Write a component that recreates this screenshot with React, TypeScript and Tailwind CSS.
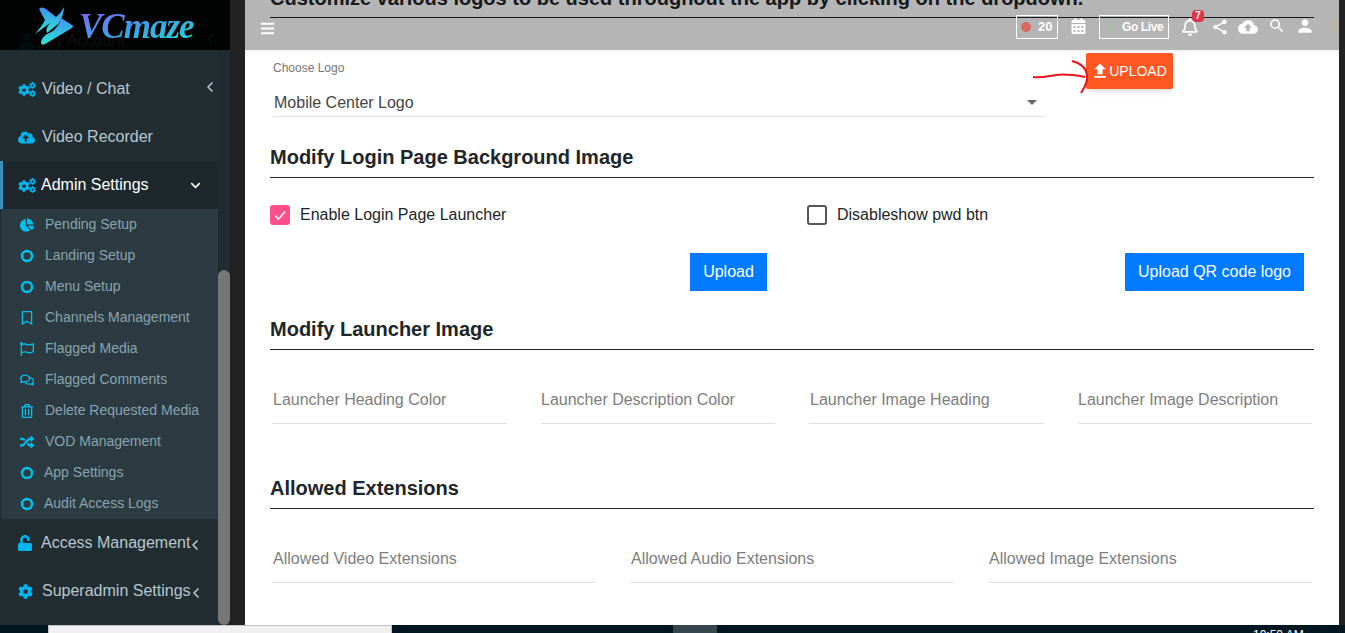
import React from "react";
import {
  FaCloudUploadAlt, FaChartPie, FaRegBookmark, FaRegFlag, FaRegComments,
  FaRegTrashAlt, FaRandom, FaUnlock, FaCog, FaBars, FaCalendarAlt, FaRegBell, FaUser,
} from "react-icons/fa";
import { MdShare, MdCloudUpload, MdSearch, MdPerson, MdFileUpload } from "react-icons/md";
import { ChevronLeft, ChevronDown } from "lucide-react";

type IconT = React.ComponentType<{ className?: string }>;

function Ring({ className }: { className?: string }) {
  return (
    <svg viewBox="0 0 14 14" className={className}>
      <circle cx="7" cy="7" r="5" fill="none" stroke="currentColor" strokeWidth="2.5" />
    </svg>
  );
}

function Cogs({ className }: { className?: string }) {
  return (
    <span className={`flex items-center ${className ?? ""}`}>
      <FaCog className="w-[12px] h-[12px] shrink-0 mt-[1px]" />
      <span className="flex flex-col gap-[1px] -ml-[1px]">
        <FaCog className="w-[7px] h-[7px]" />
        <FaCog className="w-[7px] h-[7px]" />
      </span>
    </span>
  );
}

const subItems: [IconT, string, string][] = [
  [FaChartPie, "Pending Setup", "ml-[7px]"],
  [Ring, "Landing Setup", "ml-[7px]"],
  [Ring, "Menu Setup", "ml-[7px]"],
  [FaRegBookmark, "Channels Management", "ml-[7px]"],
  [FaRegFlag, "Flagged Media", "ml-[7px]"],
  [FaRegComments, "Flagged Comments", "ml-[7px]"],
  [FaRegTrashAlt, "Delete Requested Media", "ml-[7px]"],
  [FaRandom, "VOD Management", "ml-[7px]"],
  [Ring, "App Settings", "ml-[6px]"],
  [Ring, "Audit Access Logs", "ml-[6px]"],
];

function NavRow({ icon: Icon, label, chevron, active, gap, iconClass }: { icon: IconT; label: string; chevron?: "left" | "down" | "tight"; active?: boolean; gap?: string; iconClass?: string }) {
  return (
    <div className={`flex items-center h-12 text-[16px] ${active ? "bg-[#1e282c] text-white border-l-[3px] border-[#3c8dbc] pl-[15px]" : "text-[#b8c7ce] pl-[18px]"}`}>
      <Icon className={`${iconClass ?? "w-[17px] h-[17px]"} text-[#00b5f0] shrink-0`} />
      <span className={gap ?? "ml-[7px]"}>{label}</span>
      {chevron === "left" && <ChevronLeft strokeWidth={2.5} className="ml-auto w-[16px] h-[16px] -mt-[4px]" />}
      {chevron === "down" && <ChevronDown strokeWidth={2.5} className="ml-auto mr-[15px] w-[15px] h-[15px] text-white" />}
      {chevron === "tight" && <ChevronLeft strokeWidth={2.5} className="-ml-[3px] w-[16px] h-[16px] mt-[4px]" />}
    </div>
  );
}

function Field({ label, className, pad }: { label: string; className: string; pad?: string }) {
  return (
    <div className={`h-[50px] pt-[2px] border-b border-[#e0e0e0] flex items-center text-[16px] text-[#7d7d7d] ${pad ?? "pl-0"} ${className}`}>
      <span>{label}</span>
    </div>
  );
}

function SectionTitle({ children, className }: { children: React.ReactNode; className?: string }) {
  return (
    <div className={`border-b border-[#212529] h-[40px] pb-[1px] flex items-center text-[20px] font-bold text-[#212529] ${className ?? ""}`}>
      {children}
    </div>
  );
}

export default function App() {
  return (
    <div className="w-[1345px] h-[633px] flex flex-col overflow-hidden bg-[#222] font-['Liberation_Sans',Arial,sans-serif]">
      <div className="flex h-[625px] relative">
        {/* Sidebar */}
        <aside className="w-[230px] shrink-0 relative flex bg-[#1f2b31] overflow-hidden">
          <div className="w-[218px] bg-[#222d32] pt-[17px]">
            <NavRow icon={FaUser} label="My Account" chevron="left" />
            <NavRow icon={Cogs} label="Video / Chat" chevron="left" />
            <NavRow icon={FaCloudUploadAlt} label="Video Recorder" />
            <NavRow icon={Cogs} label="Admin Settings" chevron="down" active gap="ml-[6px]" />
            <div className="bg-[#2c3b41] h-[310px] ml-[1px]">
              {subItems.map(([Icon, label, ml]) => (
                <div key={label} className="h-[31px] flex items-center pl-[19px] text-[14px] text-[#8aa4af]">
                  <Icon className="w-[14px] h-[14px] text-[#00c0ef] shrink-0" />
                  <span className={`${ml} pl-[4px]`}>{label}</span>
                </div>
              ))}
            </div>
            <NavRow icon={FaUnlock} iconClass="w-[14px] h-[16px]" label="Access Management" chevron="tight" gap="ml-[9px]" />
            <NavRow icon={FaCog} iconClass="w-[15px] h-[15px]" label="Superadmin Settings" chevron="tight" gap="ml-[9px]" />
          </div>
          <div className="flex-1 pt-[270px]">
            <div className="h-[355px] bg-[#777] rounded-[6px]" />
          </div>
          {/* Logo bar overlay */}
          <div className="absolute left-0 top-0 w-[230px] h-[50px] bg-[rgba(0,0,0,0.93)] flex items-center pl-[34px]">
            <svg width="42" height="40" viewBox="0 0 42 40" className="shrink-0 mt-[2px]">
              <defs>
                <linearGradient id="lg" x1="0" y1="0" x2="0" y2="1">
                  <stop offset="0" stopColor="#3f8ff0" />
                  <stop offset="1" stopColor="#2ee6d6" />
                </linearGradient>
              </defs>
              <path d="M5 3 Q8 0 12 3 L22 11 Q27 7 30 1 Q30 10 24 18 L13 27 Q11 23 16 17 L1 28 Q8 20 11 14 Z" fill="url(#lg)" />
              <path d="M27 12 L38 19 Q40 20 38 22 L11 38 Q7 40 7 36 Q8 31 13 28 L19 25 Q25 20 27 12 Z" fill="url(#lg)" />
            </svg>
            <span className="ml-[3px] mt-[3px] text-[35px] leading-none italic font-bold font-['Liberation_Serif',serif] tracking-[-1px] bg-gradient-to-br from-[#7a5cf0] via-[#3aa0e8] to-[#25e0d0] bg-clip-text text-transparent">
              VCmaze
            </span>
          </div>
        </aside>

        <div className="w-[15px] shrink-0 bg-[#222]" />

        {/* Main */}
        <main className="w-[1094px] shrink-0 bg-white relative overflow-hidden">
          <div className="px-[25px] -mt-[22px]">
            <SectionTitle className="!items-end !pb-[4px]">
              <span className="whitespace-nowrap">Customize various logos to be used throughout the app by clicking on the dropdown.</span>
            </SectionTitle>

            <div className="flex items-start mt-[42px]">
              <div className="w-[771px] ml-[3px]">
                <div className="text-[12px] leading-[16px] text-[#757575]">Choose Logo</div>
                <div className="h-[38px] pt-[10px] border-b border-[#e0e0e0] flex items-center justify-between text-[16px] text-[#444] pl-[1px] pr-[7px] mt-[3px]">
                  <span>Mobile Center Logo</span>
                  <span className="w-0 h-0 border-x-[5px] border-x-transparent border-t-[5px] border-t-[#666]" />
                </div>
              </div>
              <button className="ml-[42px] -mt-[7px] w-[87px] h-[36px] bg-[#ff5722] text-white text-[14px] rounded-[2px] shadow-md flex items-center justify-center">
                <MdFileUpload className="w-[20px] h-[20px] -ml-[2px] -mr-[1px]" />
                UPLOAD
              </button>
            </div>

            <SectionTitle className="mt-[21px]">Modify Login Page Background Image</SectionTitle>

            <div className="flex items-center text-[16px] text-[#212529] mt-[27px] h-[20px]">
              <div className="w-[537px] flex items-center">
                <span className="w-[20px] h-[20px] rounded-[3px] bg-[#ff4f8b] flex items-center justify-center">
                  <svg width="14" height="14" viewBox="0 0 14 14"><path d="M2 7.5 L5.5 11 L12 3.5" fill="none" stroke="#fff" strokeWidth="1.6" /></svg>
                </span>
                <span className="ml-[10px]">Enable Login Page Launcher</span>
              </div>
              <div className="flex items-center">
                <span className="w-[20px] h-[20px] rounded-[3px] border-2 border-[#555]" />
                <span className="ml-[10px]">Disableshow pwd btn</span>
              </div>
            </div>

            <div className="flex mt-[28px] text-[16px] text-white">
              <button className="ml-[420px] w-[77px] h-[38px] bg-[#007bff]">Upload</button>
              <button className="ml-[358px] w-[179px] h-[38px] bg-[#007bff]">Upload QR code logo</button>
            </div>

            <SectionTitle className="mt-[19px]">Modify Launcher Image</SectionTitle>

            <div className="flex mt-[24px] pr-[2px]">
              <Field label="Launcher Heading Color" className="ml-[2px] w-[235px]" pad="pl-[1px]" />
              <Field label="Launcher Description Color" className="ml-[34px] w-[234px]" />
              <Field label="Launcher Image Heading" className="ml-[34px] w-[235px]" pad="pl-[1px]" />
              <Field label="Launcher Image Description" className="ml-[34px] w-[234px]" />
            </div>

            <SectionTitle className="mt-[45px]">Allowed Extensions</SectionTitle>

            <div className="flex mt-[24px] pr-[2px]">
              <Field label="Allowed Video Extensions" className="ml-[2px] w-[324px]" pad="pl-[1px]" />
              <Field label="Allowed Audio Extensions" className="ml-[34px] w-[324px]" pad="pl-[1px]" />
              <Field label="Allowed Image Extensions" className="ml-[34px] w-[324px]" pad="pl-[1px]" />
            </div>
          </div>

          {/* Translucent top header */}
          <header className="absolute left-0 top-0 w-full h-[50px] bg-[rgba(0,0,0,0.29)] shadow-[0_1px_3px_rgba(0,0,0,0.08)] flex items-center text-white">
            <FaBars className="ml-[15px] w-[15px] h-[15px] mt-[6px]" />
            <div className="ml-auto flex items-center mr-[24px] mt-[4px]">
              <div className="w-[42px] h-[24px] border border-white flex items-center pl-[4px] text-[13px] font-bold">
                <span className="w-[10px] h-[10px] rounded-full bg-[#d9685f]" />
                <span className="ml-[7px]">20</span>
              </div>
              <FaCalendarAlt className="ml-[13px] w-[15px] h-[16px] -mt-[2px]" />
              <div className="ml-[13px] w-[70px] h-[24px] border border-white flex items-center pl-[5px] text-[12px] font-bold tracking-[-0.4px]">
                <span className="w-[10px] h-[10px] rounded-full bg-[#adb8ae]" />
                <span className="ml-[7px]">Go Live</span>
              </div>
              <div className="relative ml-[12px]">
                <FaRegBell className="w-[18px] h-[18px]" />
                <span className="absolute -top-[8px] left-[11px] w-[12px] h-[12px] rounded-[4px] bg-[#dc3545] text-[10px] leading-[12px] font-bold text-center">7</span>
              </div>
              <MdShare className="ml-[12px] w-[18px] h-[18px]" />
              <MdCloudUpload className="ml-[9px] w-[20px] h-[20px]" />
              <MdSearch className="ml-[10px] w-[18px] h-[18px] -mt-[3px]" />
              <MdPerson className="ml-[9px] w-[20px] h-[20px] -mt-[2px]" />
            </div>
          </header>
          <span className="absolute left-[1084px] top-[18px] w-[10px] h-[16px] bg-[#b9b5a8] rounded-l-[3px]" />

          {/* Red hand-drawn annotation */}
          <svg className="absolute left-[785px] top-[55px] pointer-events-none" width="60" height="45" viewBox="0 0 60 45">
            <path d="M3 22 C12 23 18 21 26 20 C33 19 44 20 55 22" fill="none" stroke="#e8141c" strokeWidth="2" />
            <path d="M42 6 C50 8 56 13 57 20 C58 28 54 33 51 38" fill="none" stroke="#e8141c" strokeWidth="2" />
          </svg>
        </main>

        <div className="flex-1 bg-[#222]" />
      </div>

      {/* OS taskbar sliver */}
      <div className="h-[8px] bg-[#001722] flex relative overflow-hidden">
        <div className="ml-[48px] w-[344px] bg-[#f0f0f0] border-t border-x border-[#c0c0c0]" />
        <div className="ml-[281px] w-[44px] bg-[#36464f]" />
        <div className="absolute left-[1253px] top-[3px] text-[12px] leading-[14px] text-white whitespace-nowrap">10:50 AM</div>
      </div>
    </div>
  );
}
